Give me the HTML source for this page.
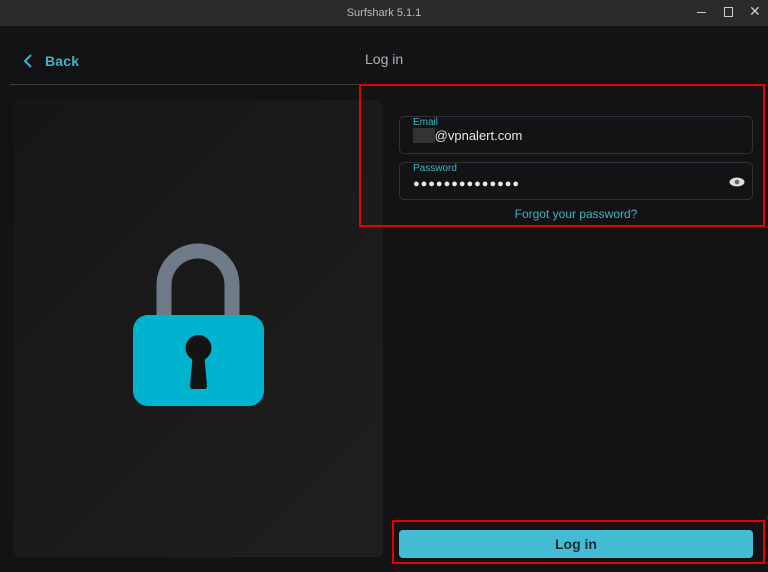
<!DOCTYPE html>
<html><head><style>
*{margin:0;padding:0;box-sizing:border-box}
body{width:768px;height:572px;background:#131315;font-family:"Liberation Sans",sans-serif;position:relative;overflow:hidden}
.abs{position:absolute}
.tb{left:0;top:0;width:768px;height:26px;background:#2b2b2b;color:#bbb;font-size:11px;text-align:center;line-height:26px}
.field{left:399px;width:354px;height:38px;border:1px solid #2e3236;border-radius:5px}
.lbl{position:absolute;left:13px;top:0px;font-size:10px;color:#3fb3c7}
.val{position:absolute;left:13px;top:11px;font-size:13px;color:#e8e8e8}
</style></head><body>
<div class="abs tb">Surfshark 5.1.1</div>
<div class="abs" style="left:697px;top:12px;width:9px;height:1px;background:#ccc"></div>
<div class="abs" style="left:724px;top:7px;width:9px;height:10px;border:1.5px solid #ccc"></div>
<div class="abs" style="left:749px;top:3px;color:#ccc;font-size:14px">✕</div>
<svg class="abs" style="left:22px;top:53px" width="12" height="16"><path d="M9 2L3 8l6 6" stroke="#3fb3c7" stroke-width="2" fill="none"/></svg>
<div class="abs" style="left:45px;top:53px;font-size:14px;color:#3fb3c7;font-weight:600;letter-spacing:0.2px">Back</div>
<div class="abs" style="left:365px;top:51px;font-size:14px;color:#aeb4b8">Log in</div>
<div class="abs" style="left:10px;top:84px;width:372px;height:1px;background:#3a3d40"></div>
<div class="abs" style="left:14px;top:100px;width:369px;height:457px;border-radius:5px;background:linear-gradient(135deg,#161617,#1f1f1f)"></div>
<svg class="abs" style="left:130px;top:240px" width="140" height="170">
<path d="M34 76V45a34 34 0 0 1 68 0v31" stroke="#6f7b88" stroke-width="15" fill="none"/>
<rect x="3" y="75" width="131" height="91" rx="15" fill="#00b4d0"/>
<circle cx="68.5" cy="108" r="13" fill="#141414"/>
<path d="M63 112h11l3 34q0 3-3 3h-11q-3 0-3-3z" fill="#141414"/>
</svg>
<div class="abs" style="left:359px;top:84px;width:406px;height:143px;border:2px solid #e80000"></div>
<div class="abs field" style="top:116px"><span class="lbl">Email</span><span class="val"><span style="color:#555;background:#333">&nbsp;&nbsp;&nbsp;&nbsp;&nbsp;&nbsp;</span>@vpnalert.com</span></div>
<div class="abs field" style="top:162px"><span class="lbl">Password</span><span class="val" style="top:15px;font-size:11px;letter-spacing:1px">●●●●●●●●●●●●●●</span>
<svg style="position:absolute;right:7px;top:14px" width="16" height="10"><ellipse cx="8" cy="5" rx="7.5" ry="4.5" fill="#ddd"/><circle cx="8" cy="5" r="2.3" fill="#666"/></svg></div>
<div class="abs" style="left:399px;width:354px;top:207px;text-align:center;font-size:12px;color:#3fb3c7">Forgot your password?</div>
<div class="abs" style="left:392px;top:520px;width:373px;height:44px;border:2px solid #e80000"></div>
<div class="abs" style="left:399px;top:530px;width:354px;height:28px;background:#44bcd4;border-radius:4px;text-align:center;line-height:28px;font-size:14px;font-weight:bold;color:#1c2a33">Log in</div>
</body></html>
